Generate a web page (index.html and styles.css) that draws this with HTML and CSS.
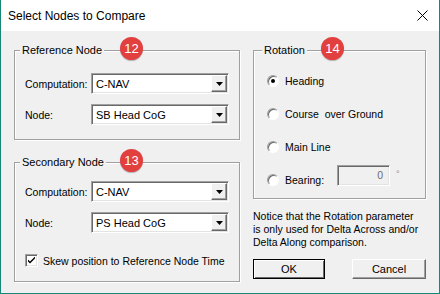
FILE: index.html
```html
<!DOCTYPE html>
<html>
  <head>
    <title>Select Nodes to Compare</title>
    <meta charset="utf-8">
    <link rel="stylesheet" href="styles.css">
  </head>
  <body>
  <div id="dialog">
    <div id="titlebar">
      <span id="title">Select Nodes to Compare</span>
      <svg id="close" width="11" height="11" viewBox="0 0 11 11">
        <path d="M0.5 0.5L10.5 10.5M10.5 0.5L0.5 10.5" stroke="#000" stroke-width="1"/>
      </svg>
    </div>
    <div id="client">
      <div class="col-left">
        <div class="group" id="refgroup">
          <div class="group-head"><span class="legend">Reference Node</span></div>
          <span class="badge">12</span>
          <div class="fields">
            <div class="row">
              <span class="lbl">Computation:</span>
              <div class="combo"><span class="combo-text">C-NAV</span><span class="combo-btn"><svg width="7" height="4" viewBox="0 0 7 4"><path d="M0 0H7L3.5 4Z" fill="#000"/></svg></span></div>
            </div>
            <div class="row">
              <span class="lbl">Node:</span>
              <div class="combo"><span class="combo-text">SB Head CoG</span><span class="combo-btn"><svg width="7" height="4" viewBox="0 0 7 4"><path d="M0 0H7L3.5 4Z" fill="#000"/></svg></span></div>
            </div>
          </div>
        </div>
        <div class="group" id="secgroup">
          <div class="group-head"><span class="legend">Secondary Node</span></div>
          <span class="badge">13</span>
          <div class="fields">
            <div class="row">
              <span class="lbl">Computation:</span>
              <div class="combo"><span class="combo-text">C-NAV</span><span class="combo-btn"><svg width="7" height="4" viewBox="0 0 7 4"><path d="M0 0H7L3.5 4Z" fill="#000"/></svg></span></div>
            </div>
            <div class="row">
              <span class="lbl">Node:</span>
              <div class="combo"><span class="combo-text">PS Head CoG</span><span class="combo-btn"><svg width="7" height="4" viewBox="0 0 7 4"><path d="M0 0H7L3.5 4Z" fill="#000"/></svg></span></div>
            </div>
          </div>
          <div class="check-row">
            <span class="checkbox"><svg width="7" height="7" viewBox="0 0 7 7"><path d="M0 2.5V4.5L2 6.5L7 1.5V-0.5L2 4.5Z" fill="#000"/></svg></span>
            <span>Skew position to Reference Node Time</span>
          </div>
        </div>
      </div>
      <div class="col-right">
        <div class="group" id="rotgroup">
          <div class="group-head"><span class="legend">Rotation</span></div>
          <span class="badge">14</span>
          <div class="radios">
            <div class="row"><span class="radio checked"></span><span>Heading</span></div>
            <div class="row"><span class="radio"></span><span>Course&nbsp; over Ground</span></div>
            <div class="row"><span class="radio"></span><span>Main Line</span></div>
            <div class="row">
              <span class="radio"></span><span class="bearing-lbl">Bearing:</span>
              <div class="bearing-input">0</div>
              <span class="degree">°</span>
            </div>
          </div>
        </div>
        <div class="notice">
          Notice that the Rotation parameter<br>
          is only used for Delta Across and/or<br>
          Delta Along comparison.
        </div>
        <div class="buttons">
          <button class="btn default">OK</button>
          <button class="btn" id="cancel">Cancel</button>
        </div>
      </div>
    </div>
  </div>
  </body>
</html>
```

FILE: styles.css
```css
body{
  margin: 0;
  font-family: "Liberation Sans", Arial, sans-serif;
  font-size: 10.5px;
  color: #000;
}

#dialog{
  width: 440px;
  height: 294px;
  box-sizing: border-box;
  border: 1px solid #17877a;
  border-top: none;
  background: #f0f0f0;
  display: flex;
  flex-direction: column;
}

#titlebar{
  height: 31px;
  flex: none;
  background: #fff;
  display: flex;
  align-items: center;
  justify-content: space-between;
  padding: 0 11px 0 7px;
}

#title{
  font-size: 12px;
}

#client{
  flex: 1;
  display: flex;
  gap: 13px;
  padding: 19px 13px 0 13px;
}

.col-left{
  width: 226px;
  display: flex;
  flex-direction: column;
}

.col-right{
  width: 173px;
  display: flex;
  flex-direction: column;
}

/* etched group box */
.group{
  position: relative;
  border: 1px solid #a0a0a0;
  box-shadow: inset 1px 1px #fff, 1px 1px #fff;
  padding: 0 10px;
}

.group-head{
  height: 25px;
  margin: -13px 0 0 -5px;
  display: flex;
  align-items: center;
}

.legend{
  background: #f0f0f0;
  padding: 0 2px;
  line-height: 13px;
  font-size: 11px;
}

.badge{
  position: absolute;
  left: 105px;
  top: -14px;
  width: 23px;
  height: 23px;
  border-radius: 50%;
  background: #e2403f;
  box-shadow: 0 1px 1px rgba(0,0,0,0.25);
  color: #fff;
  font-size: 13px;
  line-height: 23px;
  text-align: center;
}

#rotgroup .badge{
  left: 67px;
}

.fields{
  display: flex;
  flex-direction: column;
  gap: 10px;
}

#refgroup .fields{
  margin-top: 10px;
  padding-bottom: 14px;
}

#secgroup{
  margin-top: 22px;
  padding-bottom: 14px;
}

#secgroup .fields{
  margin-top: 6px;
}

.row{
  display: flex;
  align-items: center;
  height: 21px;
  white-space: nowrap;
}

.lbl{
  width: 66px;
}

.combo{
  width: 138px;
  height: 21px;
  box-sizing: border-box;
  background: #fff;
  border: 1px solid;
  border-color: #a0a0a0 #fff #fff #a0a0a0;
  box-shadow: inset 1px 1px #696969, inset -1px -1px #e3e3e3;
  padding: 1px;
  display: flex;
  align-items: center;
}

.combo-text{
  flex: 1;
  padding-left: 3px;
  font-size: 11px;
}

.combo-btn{
  width: 16px;
  height: 17px;
  box-sizing: border-box;
  background: #f0f0f0;
  border: 1px solid;
  border-color: #fff #696969 #696969 #fff;
  box-shadow: inset -1px -1px #a0a0a0;
  display: flex;
  align-items: center;
  justify-content: center;
}

.check-row{
  display: flex;
  align-items: center;
  gap: 5px;
  margin-top: 21px;
  height: 13px;
  white-space: nowrap;
}

.checkbox{
  width: 13px;
  height: 13px;
  box-sizing: border-box;
  background: #fff;
  border: 1px solid;
  border-color: #a0a0a0 #fff #fff #a0a0a0;
  box-shadow: inset 1px 1px #696969, inset -1px -1px #e3e3e3;
  display: flex;
  align-items: center;
  justify-content: center;
}

#rotgroup{
  padding: 0 8px 8px 13px;
}

.radios{
  display: flex;
  flex-direction: column;
  gap: 12px;
  margin-top: 7px;
}

.radio{
  width: 12px;
  height: 12px;
  box-sizing: border-box;
  border-radius: 50%;
  background: #fff;
  border: 1px solid;
  border-color: #a0a0a0 #fff #fff #a0a0a0;
  box-shadow: inset 1px 1px #696969;
  margin-right: 6px;
  display: flex;
  align-items: center;
  justify-content: center;
}

.radio.checked::after{
  content: "";
  width: 4px;
  height: 4px;
  border-radius: 50%;
  background: #000;
}

.bearing-lbl{
  width: 52px;
}

.bearing-input{
  width: 53px;
  height: 21px;
  box-sizing: border-box;
  margin-bottom: 9px;
  background: #f0f0f0;
  border: 1px solid;
  border-color: #a0a0a0 #fff #fff #a0a0a0;
  box-shadow: inset 1px 1px #696969, inset -1px -1px #e3e3e3;
  color: #6d6d6d;
  text-align: right;
  padding-right: 6px;
  line-height: 19px;
}

.degree{
  color: #8a8a8a;
  margin: 0 0 12px 6px;
  font-size: 9px;
}

.notice{
  margin-top: 11px;
  line-height: 13px;
  white-space: nowrap;
}

.buttons{
  display: flex;
  justify-content: space-between;
  margin-top: 10px;
}

.btn{
  width: 72px;
  height: 20px;
  box-sizing: border-box;
  background: #f0f0f0;
  font-family: inherit;
  font-size: 11px;
  padding: 0;
  border: 1px solid;
  border-color: #fff #696969 #696969 #fff;
  box-shadow: inset -1px -1px #a0a0a0;
}

.btn.default{
  border-color: #000;
  box-shadow: inset 1px 1px #fff, inset -1px -1px #696969;
}

#cancel{
  width: 74px;
}
```
